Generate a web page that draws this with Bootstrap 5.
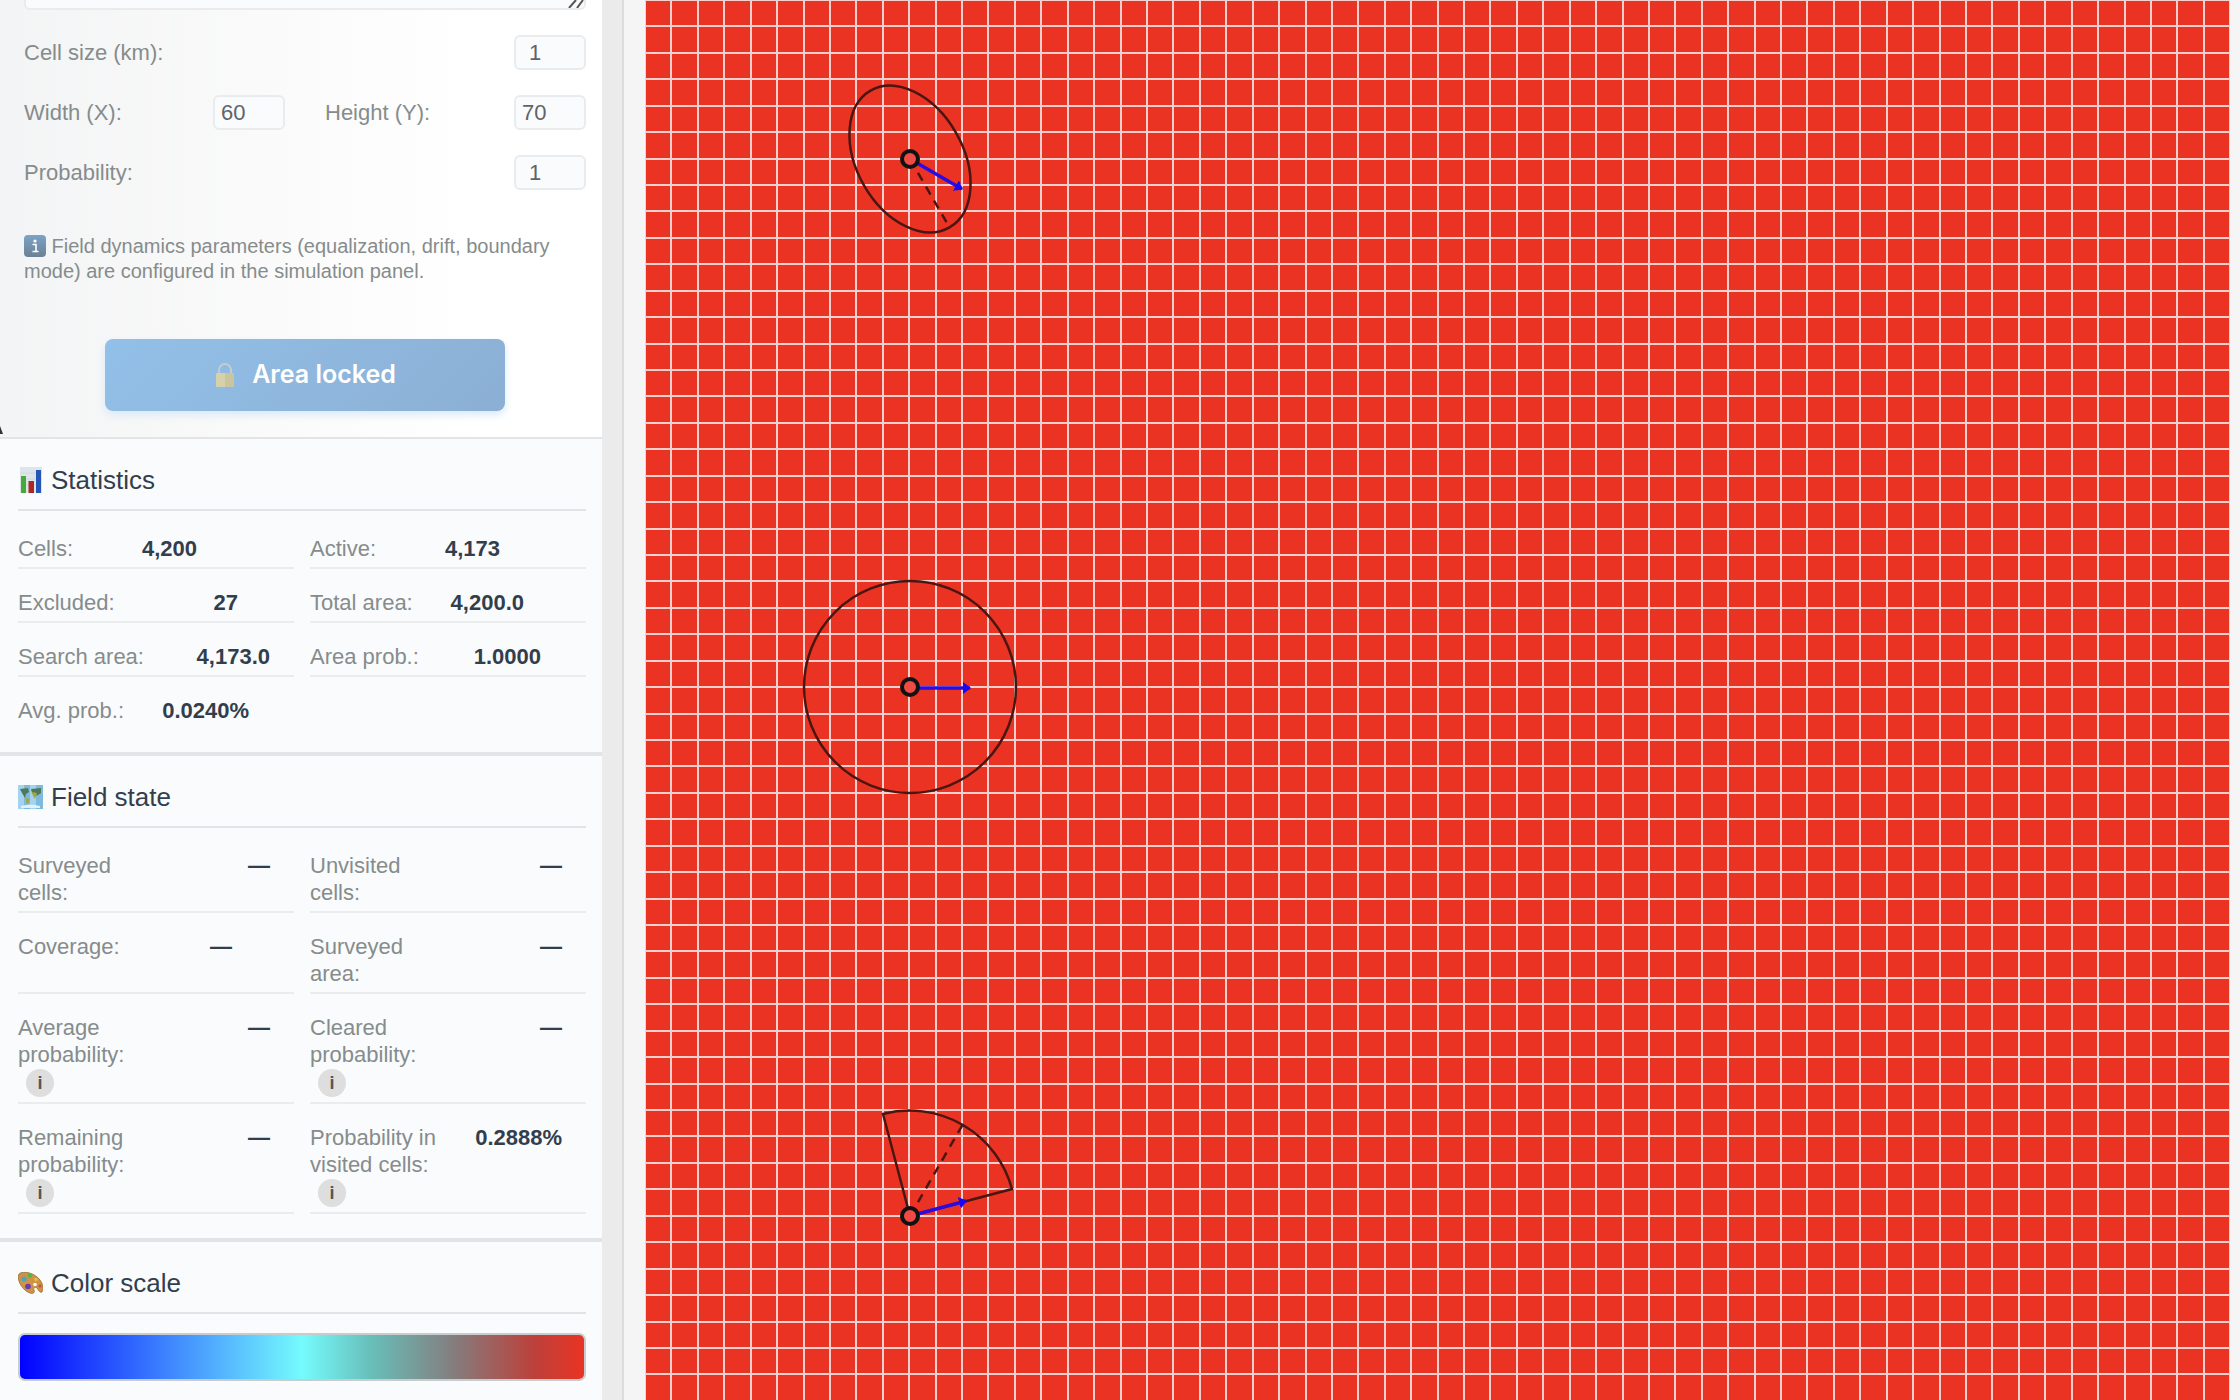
<!DOCTYPE html>
<html lang="en">
<head>
<meta charset="utf-8">
<meta name="viewport" content="width=device-width, initial-scale=1">
<title>Search area</title>
<link href="https://cdn.jsdelivr.net/npm/bootstrap@5.3.0/dist/css/bootstrap.min.css" rel="stylesheet">
<style>
  body { font-family: "Liberation Sans", Arial, sans-serif; font-size: 22px; line-height: 27px; background: #f5f5f5; }
  .side-panel { width: 602px; background: #f9fbfc; }
  .gutter-strip { width: 22px; background: #ebebeb; border-right: 2px solid #dcdcdc; }
  .params { height: 437px; padding: 0 16px 24px 24px; background: linear-gradient(90deg, #f3f4f5 0, #fafafa 260px, #fff 480px); color: #868c8c; }
  .notes-box { height: 10px; min-height: 0; padding: 0; border: 2px solid #e9ebed; border-top: 0; border-radius: 0 0 6px 6px; background: #f9fbfc; resize: none; display: block; }
  .grip { right: 2px; top: 0; }
  .param-row { height: 35px; gap: 40px; margin-top: 25px; }
  .num-box { width: 72px; height: 35px; padding: 0 6px; border: 2px solid #e9ecef; border-radius: 6px; background: #f9fbfc; color: #606468; font-size: 22px; line-height: 27px; }
  .num-box.single { padding-left: 13px; }
  .params-note { font-size: 20px; line-height: 25px; margin-top: 44px; }
  .lock-btn, .lock-btn:disabled { width: 400px; height: 72px; margin-top: 55px; border: 0; border-radius: 8px; opacity: 1; color: #fff; background: linear-gradient(135deg, #92c0e8, #8cafd4); box-shadow: 0 4px 8px #d9e9f7; font-size: 26px; font-weight: 600; gap: 16px; font-family: Inter, "Liberation Sans", sans-serif; }
  .lock-btn, .lock-btn:disabled { font-size: 25px; }
  .info-block { border: 2px solid #e1e5e8; border-width: 2px 0; padding: 26px 16px 24px 18px; }
  .block-title { font-size: 26px; line-height: 30px; font-weight: 400; color: #333e4d; padding-bottom: 14px; margin-bottom: 19px; border-bottom: 2px solid #e1e5e8; gap: 8px; }
  .stat-grid { display: grid; grid-template-columns: 1fr 1fr; gap: 15px 16px; }
  .stat-item { border-bottom: 2px solid #eaecee; padding: 5px 0; color: #868c8c; }
  .stat-item.last-one { border: 0; padding-bottom: 4px; }
  .stat-item dt { font-weight: 400; max-width: 136px; }
  .stat-item dd { margin: 0 0 0 auto; font-weight: 700; color: #333e4d; }
  .end-s { padding-right: 24px; } .end-m { padding-right: 45px; } .end-l { padding-right: 56px; }
  .end-xl { padding-right: 62px; } .end-2x { padding-right: 86px; } .end-3x { padding-right: 97px; }
  .tip-btn { display: block; width: 28px; height: 28px; margin: 1px 0 0 8px; padding: 0; border: 0; border-radius: 50%; background: #dedede; color: #555; font-size: 18px; line-height: 28px; font-weight: 700; }
  .scale-bar { height: 48px; border: 2px solid #c9cccf; border-radius: 7px; background: linear-gradient(90deg, #00f 0, #75fbfd 50%, #68bfba 62%, #857c7c 77%, #bd403a 91%, #eb3323 100%); background-origin: border-box; }
  .map-area { padding: 0 10px 0 21px; min-width: 0; }
  .map-area svg { display: block; width: 100%; height: auto; }
  .stray-tick { left: 0; top: 426px; width: 3px; height: 8px; background: #333; clip-path: polygon(0 0, 100% 100%, 0 100%); }
</style>
<script src="https://cdn.jsdelivr.net/npm/bootstrap@5.3.0/dist/js/bootstrap.bundle.min.js"></script>
</head>
<body class="vh-100 overflow-hidden d-flex align-items-stretch">
<aside class="side-panel flex-shrink-0 position-relative">
  <form class="params">
    <div class="position-relative">
      <textarea class="notes-box w-100" aria-label="Description"></textarea>
      <svg class="grip position-absolute" width="16" height="8" viewBox="0 0 16 8"><path d="M1 8 8 0M9 8l6-8" stroke="#555" stroke-width="2"/></svg>
    </div>
    <div class="d-flex align-items-center justify-content-between param-row">
      <label for="cell">Cell size (km):</label><input id="cell" class="num-box single" value="1">
    </div>
    <div class="d-flex param-row">
      <div class="d-flex flex-fill w-50 align-items-center justify-content-between"><label for="gw">Width (X):</label><input id="gw" class="num-box" value="60"></div>
      <div class="d-flex flex-fill w-50 align-items-center justify-content-between"><label for="gh">Height (Y):</label><input id="gh" class="num-box" value="70"></div>
    </div>
    <div class="d-flex align-items-center justify-content-between param-row">
      <label for="prob">Probability:</label><input id="prob" class="num-box single" value="1">
    </div>
    <p class="params-note mb-0"><svg width="22" height="22" viewBox="0 0 22 22" class="align-text-top"><defs><linearGradient id="ib" x2="0" y2="1"><stop stop-color="#7ba3c8"/><stop offset="1" stop-color="#6c8194"/></linearGradient></defs><rect width="22" height="22" rx="4" fill="url(#ib)"/><circle cx="11" cy="6" r="1.600" fill="#fff"/><path d="M8.500 9.500H12V16M8.500 16.500h6" stroke="#fff" stroke-width="1.600" fill="none"/></svg> Field dynamics parameters (equalization, drift, boundary mode) are configured in the simulation panel.</p>
    <button type="button" class="btn lock-btn d-flex align-items-center justify-content-center mx-auto" disabled>
      <svg width="22" height="26" viewBox="0 0 22 26"><path d="M5 13V8a6 6 0 0 1 12 0v5" fill="none" stroke="#c3cdd0" stroke-width="2"/><rect x="2" y="11" width="18" height="14" rx="1" fill="#d5d1ac"/><path d="M11 11h9v14h-9z" fill="#c9c59e"/></svg>
      <span>Area locked</span>
    </button>
  </form>
  <section class="info-block">
    <h2 class="block-title d-flex align-items-center"><svg width="25" height="26" viewBox="0 0 25 26"><path d="M2 0h22v26H2z" fill="#dde4ea"/><path d="M2 6h22M2 12h22M2 18h22" stroke="#d0d8df"/><path d="M3 9h5v17H3z" fill="#46a93a"/><path d="M10.500 14h5.500v12h-5.500z" fill="#a82a22"/><path d="M18 3h5v23h-5z" fill="#2456b8"/></svg>Statistics</h2>
    <dl class="stat-grid mb-0">
      <div class="stat-item d-flex"><dt>Cells:</dt><dd class="end-3x">4,200</dd></div>
      <div class="stat-item d-flex"><dt>Active:</dt><dd class="end-2x">4,173</dd></div>
      <div class="stat-item d-flex"><dt>Excluded:</dt><dd class="end-l">27</dd></div>
      <div class="stat-item d-flex"><dt>Total area:</dt><dd class="end-xl">4,200.0</dd></div>
      <div class="stat-item d-flex"><dt>Search area:</dt><dd class="end-s">4,173.0</dd></div>
      <div class="stat-item d-flex"><dt>Area prob.:</dt><dd class="end-m">1.0000</dd></div>
      <div class="stat-item d-flex last-one"><dt>Avg. prob.:</dt><dd class="end-m">0.0240%</dd></div>
    </dl>
  </section>
  <section class="info-block">
    <h2 class="block-title d-flex align-items-center"><svg width="25" height="24" viewBox="0 0 25 24"><path d="M0 0h25v24H0z" fill="#7fb9dd"/><path d="M0 0h6v24H0zM12 0h6v24h-6z" fill="#a3d3ee"/><path d="M2 4l8-1 1 4-3 2-1 4-3-5zM13 4l10-1 0 5-3 2-3 1-3-3z" fill="#4c7a5a"/><path d="M8 13l4 1-2 5-2-2zM14 7l5 1-2 6-2-3z" fill="#a5a83e"/><path d="M3 21q9-3 19 0v2H3z" fill="#e2f1f6"/></svg>Field state</h2>
    <dl class="stat-grid mb-0">
      <div class="stat-item d-flex"><dt>Surveyed<br>cells:</dt><dd class="end-s">—</dd></div>
      <div class="stat-item d-flex"><dt>Unvisited<br>cells:</dt><dd class="end-s">—</dd></div>
      <div class="stat-item d-flex"><dt>Coverage:</dt><dd class="end-xl">—</dd></div>
      <div class="stat-item d-flex"><dt>Surveyed<br>area:</dt><dd class="end-s">—</dd></div>
      <div class="stat-item d-flex"><dt>Average<br>probability:<button class="tip-btn" type="button">i</button></dt><dd class="end-s">—</dd></div>
      <div class="stat-item d-flex"><dt>Cleared<br>probability:<button class="tip-btn" type="button">i</button></dt><dd class="end-s">—</dd></div>
      <div class="stat-item d-flex"><dt>Remaining<br>probability:<button class="tip-btn" type="button">i</button></dt><dd class="end-s">—</dd></div>
      <div class="stat-item d-flex"><dt>Probability in visited cells:<button class="tip-btn" type="button">i</button></dt><dd class="end-s">0.2888%</dd></div>
    </dl>
  </section>
  <section class="info-block">
    <h2 class="block-title d-flex align-items-center"><svg width="25" height="22" viewBox="0 0 25 22"><path d="M1 2C5-2 17 1 22 8c3 4 4 9 2 12-2 1-3-1-5-4-2-2-4 0-3 2 1 3-1 4-4 3C5 19-2 8 1 2z" fill="#cf9346" stroke="#9c6a30" stroke-width=".8"/><circle cx="6" cy="7" r="2.600" fill="#4aa5c4"/><circle cx="12" cy="3.500" r="2.300" fill="#55b545"/><circle cx="10" cy="14.500" r="2.800" fill="#6a3cae"/><circle cx="18" cy="7.500" r="1.800" fill="#e3bd3e"/><circle cx="22" cy="14" r="1.600" fill="#c7503c"/><circle cx="17" cy="12.500" r="1.800" fill="#fff"/></svg>Color scale</h2>
    <div class="scale-bar"></div>
  </section>
  <span class="stray-tick position-absolute"></span>
</aside>
<div class="gutter-strip flex-shrink-0"></div>
<main class="map-area flex-grow-1 overflow-hidden">
  <svg viewBox="0 0 1585 1850" role="img" aria-label="Probability field">
    <rect width="1585" height="1850" fill="#eb3323"/>
    <g id="grid" fill="#f6d0cf" shape-rendering="crispEdges"></g>
    <defs><marker id="tip" viewBox="0 0 8 12" refX="7" refY="6" markerWidth="8" markerHeight="12" markerUnits="userSpaceOnUse" orient="auto"><path d="M0 0l8 6-8 6z" fill="#1a06f0"/></marker></defs>
    <g fill="none" stroke="#4a1611" stroke-width="2.500">
      <g transform="translate(265 159)">
        <g transform="rotate(60)"><ellipse rx="79" ry="53"/><path d="M0 0H76" stroke-dasharray="9 7"/></g>
        <path d="M0 0H60" transform="rotate(30)" stroke="#2a0ce0" stroke-width="3.500" marker-end="url(#tip)"/>
      </g>
      <g transform="translate(265 687)">
        <circle r="106"/>
        <path d="M0 1H60" stroke="#2a0ce0" stroke-width="3.500" marker-end="url(#tip)"/>
      </g>
      <g transform="translate(265 1216)">
        <path d="M0 0L-27-102A106 106 0 0 1 102-27Z"/>
        <path d="M0 0L53-92" stroke-dasharray="9 7"/>
        <path d="M0 0H58" transform="rotate(-15)" stroke="#2a0ce0" stroke-width="3.500" marker-end="url(#tip)"/>
      </g>
    </g>
    <g fill="#ef4a43" stroke="#111" stroke-width="4">
      <circle cx="265" cy="159" r="8"/><circle cx="265" cy="687" r="8"/><circle cx="265" cy="1216" r="8"/>
    </g>
  </svg>
</main>
<script>
  // Cell borders of the 60 x 70 field, snapped to whole units
  const grid = document.getElementById('grid');
  const bar = (x, y, w, h) => {
    const r = document.createElementNS('http://www.w3.org/2000/svg', 'rect');
    r.setAttribute('x', x); r.setAttribute('y', y);
    r.setAttribute('width', w); r.setAttribute('height', h);
    grid.appendChild(r);
  };
  const step = 26.43;
  for (let i = 0; i <= 60; i++) bar(Math.round(i * 26.42) - 1, 0, 2, 1850);
  for (let j = 0; j <= 70; j++) bar(0, Math.round(j * step) - 1, 1585, 2);
</script>
</body>
</html>
